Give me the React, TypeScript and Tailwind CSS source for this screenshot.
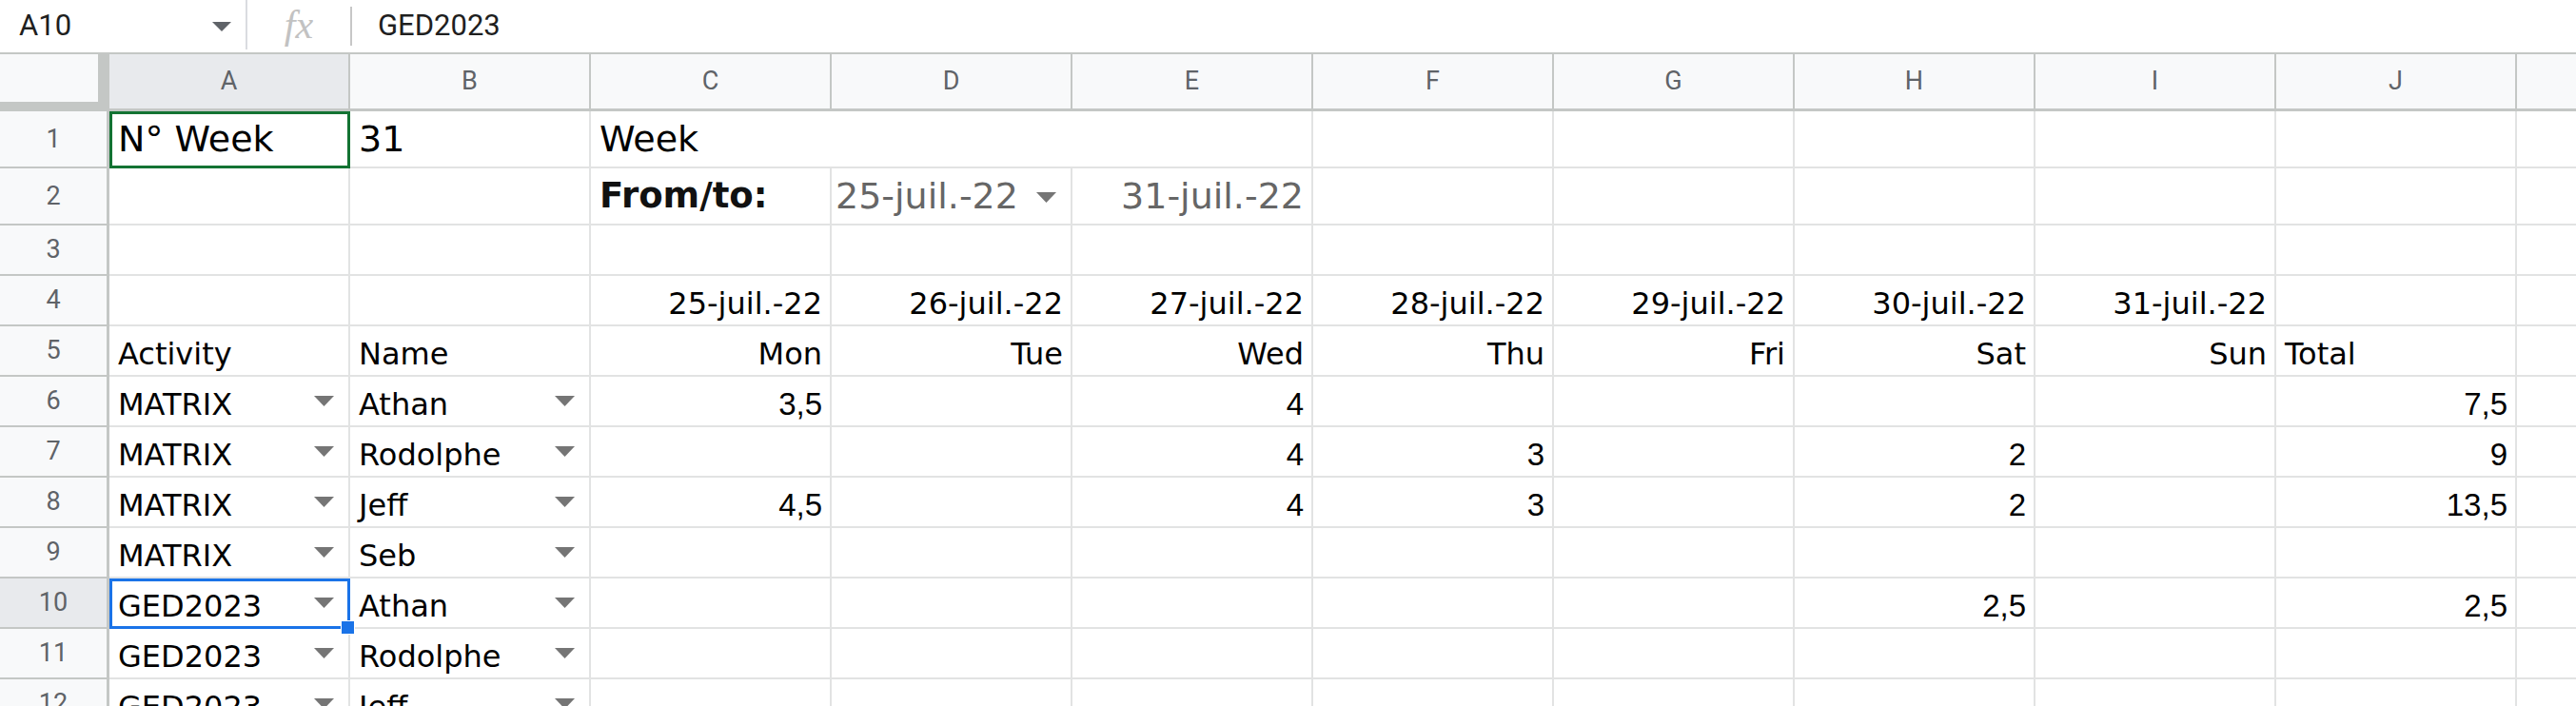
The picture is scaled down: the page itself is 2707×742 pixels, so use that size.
const COLS = ["A", "B", "C", "D", "E", "F", "G", "H", "I", "J", "K"];
const DAYS = ["Mon", "Tue", "Wed", "Thu", "Fri", "Sat", "Sun"];
const DATES = ["25", "26", "27", "28", "29", "30", "31"].map((d) => `${d}-juil.-22`);

const ENTRIES = [
  { row: 6, activity: "MATRIX", name: "Athan", hours: ["3,5", "", "4", "", "", "", ""], total: "7,5" },
  { row: 7, activity: "MATRIX", name: "Rodolphe", hours: ["", "", "4", "3", "", "2", ""], total: "9" },
  { row: 8, activity: "MATRIX", name: "Jeff", hours: ["4,5", "", "4", "3", "", "2", ""], total: "13,5" },
  { row: 9, activity: "MATRIX", name: "Seb", hours: ["", "", "", "", "", "", ""], total: "" },
  { row: 10, activity: "GED2023", name: "Athan", hours: ["", "", "", "", "", "2,5", ""], total: "2,5" },
  { row: 11, activity: "GED2023", name: "Rodolphe", hours: ["", "", "", "", "", "", ""], total: "" },
  { row: 12, activity: "GED2023", name: "Jeff", hours: ["", "", "", "", "", "", ""], total: "" },
];

const ui = "font-['Roboto',sans-serif]";
const label = "font-['DejaVu_Sans',sans-serif]";
const num = "font-['Liberation_Sans',Arial,sans-serif]";

const cellBase = "shrink-0 relative flex border-r-2 border-b-2 border-[#e2e3e3]";

function Caret({ className = "" }: { className?: string }) {
  return (
    <svg width="21" height="11" viewBox="0 0 21 11" className={className}>
      <path d="M0 0h21L10.5 11z" fill="#757575" />
    </svg>
  );
}

function RowHead({ n, active }: { n: number; active?: boolean }) {
  return (
    <div
      className={`w-[115px] shrink-0 flex items-center justify-center border-r-[3px] border-b-2 border-[#c4c7c5] ${ui} text-[27px] text-[#5f6368] ${
        active ? "bg-[#e8eaed]" : "bg-[#f8f9fa]"
      }`}
    >
      {n}
    </div>
  );
}

function Cell({ children, className = "", wide }: { children?: React.ReactNode; className?: string; wide?: boolean }) {
  return <div className={`${wide ? "w-[759px]" : "w-[253px]"} ${cellBase} ${className}`}>{children}</div>;
}

function LabelCell({ text, right }: { text: string; right?: boolean }) {
  return (
    <Cell className={`items-end pb-[6px] ${right ? "justify-end pr-[8px]" : "pl-[9px]"}`}>
      <span className={`${label} text-[32px] leading-[32px] text-black whitespace-nowrap`}>{text}</span>
    </Cell>
  );
}

function NumCell({ text }: { text: string }) {
  return (
    <Cell className="items-end justify-end pr-[8px] pb-[6px]">
      <span className={`${num} text-[33px] leading-[33px] text-black`}>{text}</span>
    </Cell>
  );
}

function DropCell({ text, selected }: { text: string; selected?: boolean }) {
  return (
    <Cell className="justify-between pl-[9px] pr-[15px]">
      <span className={`self-end pb-[6px] ${label} text-[32px] leading-[32px] text-black whitespace-nowrap`}>{text}</span>
      <Caret className="self-center" />
      {selected && (
        <>
          <div className="absolute top-0 left-0 -right-[2px] -bottom-[2px] border-[3px] border-[#1a73e8] pointer-events-none" />
          <div className="absolute -right-[7px] -bottom-[8px] z-10 w-[15px] h-[15px] bg-[#1a73e8] border border-white" />
        </>
      )}
    </Cell>
  );
}

function Empty({ n }: { n: number }) {
  return (
    <>
      {Array.from({ length: n }).map((_, i) => (
        <Cell key={i} />
      ))}
    </>
  );
}

function FormulaBar() {
  return (
    <div className="h-[57px] flex items-stretch border-b-2 border-[#c4c7c5] bg-white">
      <div className="w-[258px] flex items-center justify-between pl-[20px] pr-[15px]">
        <span className={`${ui} text-[31px] text-[#1f1f1f]`}>A10</span>
        <svg width="20" height="10" viewBox="0 0 20 10">
          <path d="M0 0h20L10 10z" fill="#5f6368" />
        </svg>
      </div>
      <div className="w-[2px] mb-[3px] bg-[#dadce0]" />
      <div className="w-[108px] flex items-center justify-center">
        <span className="font-['Liberation_Serif',serif] italic text-[42px] leading-none text-[#c2c2c2] -mt-[4px]">fx</span>
      </div>
      <div className="w-[2px] my-[7px] bg-[#c7c7c7]" />
      <div className="flex items-center pl-[27px]">
        <span className={`${ui} text-[31px] text-[#1f1f1f]`}>GED2023</span>
      </div>
    </div>
  );
}

function ColumnHeader() {
  return (
    <div className="flex h-[60px]">
      <div className="w-[115px] shrink-0 bg-[#f8f9fa]">
        <div className="h-full border-r-[12px] border-b-[10px] border-[#c4c7c5]" />
      </div>
      {COLS.map((c) => (
        <div
          key={c}
          className={`w-[253px] shrink-0 flex items-center justify-center border-r-2 border-b-[3px] border-[#c4c7c5] ${ui} text-[27px] text-[#5f6368] ${
            c === "A" ? "bg-[#e8eaed]" : "bg-[#f8f9fa]"
          }`}
        >
          {/* K's letter sits past the right edge of the window */}
          {c === "K" ? null : c}
        </div>
      ))}
    </div>
  );
}

export default function App() {
  return (
    <div className="w-[2707px] h-[742px] overflow-hidden bg-white">
      <FormulaBar />
      <ColumnHeader />

      {/* row 1 */}
      <div className="flex h-[60px]">
        <RowHead n={1} />
        <Cell className="items-end pl-[9px] pb-[10px]">
          <span className={`${label} text-[38px] leading-[38px] text-black whitespace-nowrap`}>N° Week</span>
          <div className="absolute top-0 left-0 -right-[2px] -bottom-[2px] border-[3px] border-[#137333]" />
        </Cell>
        <Cell className="items-end pl-[9px] pb-[10px]">
          <span className={`${label} text-[38px] leading-[38px] text-black`}>31</span>
        </Cell>
        <Cell wide className="items-end pl-[9px] pb-[10px]">
          <span className={`${label} text-[38px] leading-[38px] text-black`}>Week</span>
        </Cell>
        <Empty n={6} />
      </div>

      {/* row 2 */}
      <div className="flex h-[60px]">
        <RowHead n={2} />
        <Empty n={2} />
        <Cell className="items-end pl-[9px] pb-[10px]">
          <span className={`${label} font-bold text-[37px] leading-[38px] text-[#111] whitespace-nowrap`}>From/to:</span>
        </Cell>
        <Cell className="justify-between pl-[4px] pr-[15px]">
          <span className={`self-end pb-[10px] ${label} text-[38px] leading-[38px] text-[#666666] whitespace-nowrap`}>
            25-juil.-22
          </span>
          <Caret className="self-center mt-[2px]" />
        </Cell>
        <Cell className="items-end justify-end pr-[8px] pb-[10px]">
          <span className={`${label} text-[38px] leading-[38px] text-[#666666] whitespace-nowrap`}>31-juil.-22</span>
        </Cell>
        <Empty n={6} />
      </div>

      {/* row 3 */}
      <div className="flex h-[53px]">
        <RowHead n={3} />
        <Empty n={11} />
      </div>

      {/* row 4 */}
      <div className="flex h-[53px]">
        <RowHead n={4} />
        <Empty n={2} />
        {DATES.map((d) => (
          <LabelCell key={d} text={d} right />
        ))}
        <Empty n={2} />
      </div>

      {/* row 5 */}
      <div className="flex h-[53px]">
        <RowHead n={5} />
        <LabelCell text="Activity" />
        <LabelCell text="Name" />
        {DAYS.map((d) => (
          <LabelCell key={d} text={d} right />
        ))}
        <LabelCell text="Total" />
        <Empty n={1} />
      </div>

      {ENTRIES.map((e) => (
        <div key={e.row} className="flex h-[53px]">
          <RowHead n={e.row} active={e.row === 10} />
          <DropCell text={e.activity} selected={e.row === 10} />
          <DropCell text={e.name} />
          {e.hours.map((h, i) => (h ? <NumCell key={i} text={h} /> : <Cell key={i} />))}
          {e.total ? <NumCell text={e.total} /> : <Cell />}
          <Empty n={1} />
        </div>
      ))}
    </div>
  );
}
